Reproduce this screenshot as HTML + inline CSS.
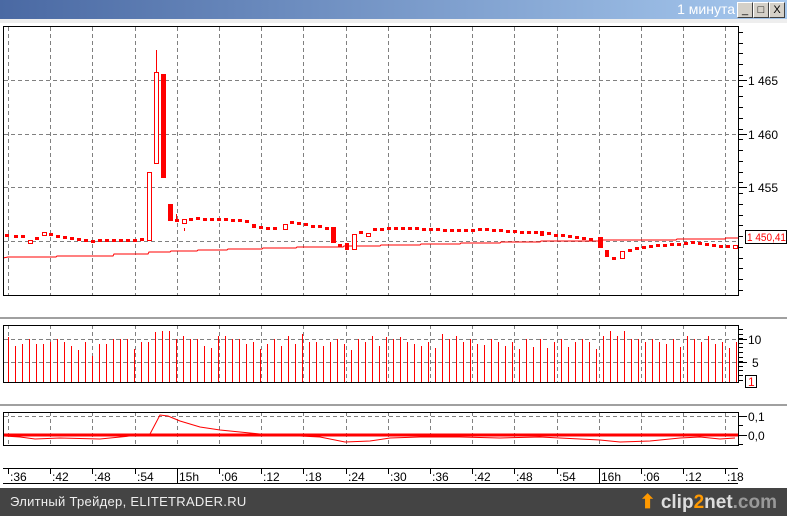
<!DOCTYPE html>
<html><head><meta charset="utf-8"><style>
html,body{margin:0;padding:0;background:#fff;width:787px;height:516px;overflow:hidden;font-family:"Liberation Sans",sans-serif}
#title{position:absolute;left:0;top:0;width:787px;height:19px;background:linear-gradient(90deg,#4a69a3,#a6c8ee)}
#title span{position:absolute;right:52px;top:1px;color:#fff;font-size:14px}
.btn{position:absolute;top:2px;width:14px;height:14px;background:#d4d0c8;border:1px solid;border-color:#fff #404040 #404040 #fff;font-size:11px;line-height:14px;text-align:center;color:#000}
#foot{position:absolute;left:0;top:488px;width:787px;height:28px;background:#444}
#foot .t{position:absolute;left:10px;top:6px;color:#eee;font-size:13px;letter-spacing:.3px}
#foot .l{position:absolute;right:10px;top:3px;color:#ddd;font-size:19px;font-weight:bold}
svg{position:absolute;left:0;top:0}
</style></head><body>
<div id="title"><span>1 минута</span>
<div class="btn" style="left:737px">_</div><div class="btn" style="left:753px">□</div><div class="btn" style="left:769px">X</div></div>
<svg id="s" width="787" height="488" xmlns="http://www.w3.org/2000/svg" font-family="Liberation Sans, sans-serif" font-size="12"></svg>
<div id="foot"><div class="t">Элитный Трейдер, ELITETRADER.RU</div><div class="l"><span style="color:#f90">⬆</span> clip<span style="color:#f90">2</span>net<span style="color:#999">.com</span></div></div>
<script>
var s=document.getElementById('s'),h='';
function L(x1,y1,x2,y2,c,w,d){h+='<line x1="'+x1+'" y1="'+y1+'" x2="'+x2+'" y2="'+y2+'" stroke="'+c+'" stroke-width="'+(w||1)+'"'+(d?' stroke-dasharray="4,3"':'')+'/>';}
function R(x,y,w,hh,f,st){h+='<rect x="'+x+'" y="'+y+'" width="'+w+'" height="'+hh+'" fill="'+f+'"'+(st?' stroke="'+st+'"':'')+'/>';}
function T(x,y,t,c,fs){h+='<text x="'+x+'" y="'+y+'" fill="'+(c||'#000')+'"'+(fs?' font-size="'+fs+'"':'')+'>'+t+'</text>';}
h+='<rect x="0" y="19" width="787" height="4" fill="#eee"/>';
var vx=[];for(var i=0;i<18;i++)vx.push(Math.round(8+i*42.2));
vx.forEach(function(x){L(x+.5,27,x+.5,295,'#808080',1,1);L(x+.5,325,x+.5,382,'#808080',1,1);L(x+.5,412,x+.5,446,'#808080',1,1);});
[80,134,187,241].forEach(function(y){L(4,y+.5,738,y+.5,'#808080',1,1)});
[339,362].forEach(function(y){L(4,y+.5,738,y+.5,'#808080',1,1)});
L(4,416.5,738,416.5,'#808080',1,1);
var ma=[[3,258],[8,257],[56,257],[57,256],[113,256],[114,254],[148,254],[149,252],[170,252],[171,251],[197,251],[198,250],[227,250],[228,249],[262,249],[263,248],[296,248],[297,247],[343,247],[344,246],[380,246],[381,245],[420,245],[421,244],[460,244],[461,243],[500,243],[501,242],[540,242],[541,241],[600,241],[601,240],[676,240],[677,239],[725,239],[726,238],[738,238]];
h+='<polyline fill="none" stroke="#f00" points="'+ma.map(function(p){return p.join(',')}).join(' ')+'"/>';
var c=[[5,235,236],[14,236,237],[21,236,237],[28,240,243,1],[35,238,238],[42,233,235,1],[49,234,235],[56,236,237],[63,237,238],[70,238,240],[77,239,240],[84,240,242],[91,241,242],[98,240,241],[105,240,241],[112,240,241],[119,240,241],[126,240,241],[133,240,241],[140,239,241],[147,172,240,1],[154,72,163,1],[161,74,178],[168,204,221],[175,220,221],[182,219,223,1],[189,219,220],[196,218,220],[203,219,220],[210,219,220],[217,219,220],[224,219,221],[231,220,221],[238,220,222],[245,221,223],[252,224,228],[259,227,228],[266,228,229],[273,228,230],[283,224,229,1],[290,222,224],[297,223,225],[304,224,226],[311,226,227],[318,226,228],[325,227,230],[331,227,243],[338,245,247],[345,243,250],[352,234,249,1],[359,231,234],[366,233,236,1],[373,229,230],[380,229,230],[387,228,230],[394,228,229],[401,228,229],[408,228,229],[415,228,229],[422,229,230],[429,229,230],[436,229,230],[443,230,231],[450,230,231],[457,230,231],[464,230,231],[471,230,231],[478,229,230],[485,229,230],[492,230,231],[499,230,231],[506,231,232],[513,231,232],[520,232,233],[527,232,233],[534,232,233],[540,231,236],[547,233,234],[554,235,236],[561,235,237],[568,236,238],[575,237,238],[582,238,239],[589,239,240],[598,237,248],[605,250,257],[612,258,259],[620,251,258,1],[628,250,251],[635,248,249],[642,247,248],[649,246,247],[656,245,246],[663,245,246],[670,244,245],[677,244,245],[684,243,244],[691,242,244],[698,243,244],[705,244,245],[712,245,247],[719,246,248],[726,246,247],[733,245,248,1]];
L(156.5,50,156.5,72,'#f00');L(176.5,214,176.5,220,'#f00');L(184.5,228,184.5,231,'#f00');
c.forEach(function(k){var d=k[2]-k[1];var hh=Math.max(d,3);var y=d<3?k[1]-1:k[1];var w=d<8?4:5;if(k[3])R(k[0]+.5,y+.5,4,hh,'#fff','#f00');else R(k[0],y,w,hh,'#f00');});
R(3.5,26.5,735,269,'none','#000');
for(var y=32;y<295;y+=10.74){L(739,Math.round(y)+.5,743,Math.round(y)+.5,'#000');}
[[80,'1 465'],[134,'1 460'],[187,'1 455']].forEach(function(p){L(739,p[0]+.5,747,p[0]+.5,'#000');T(748,p[0]+5,p[1]);});
R(745.5,230.5,41,13,'#fff','#000');h+='<text x="747" y="241" fill="#f00" font-size="11" textLength="39" lengthAdjust="spacingAndGlyphs">1 450,41</text>';
R(0,317,787,2,'#a0a0a0');R(0,404,787,2,'#a0a0a0');
var vh=[45,36,38,43,38,38,40,43,40,36,32,40,26,38,38,43,43,43,33,40,40,50,51,51,43,46,43,43,36,34,46,46,43,43,38,40,33,38,43,36,46,38,48,40,40,36,40,43,38,32,43,40,46,36,45,43,45,40,38,36,40,34,48,43,46,40,43,38,37,43,40,36,40,33,43,35,43,34,40,43,35,40,43,40,33,46,51,46,51,43,43,40,43,40,38,43,35,46,43,40,46,38,40,34,40];
for(var i=0;i<vh.length;i++){var x=8+i*7;if(x>736)break;L(x+.5,382-vh[i],x+.5,382,'#f00');}
R(3.5,325.5,735,57,'none','#000');
for(var y=329;y<383;y+=4.6){L(739,Math.round(y)+.5,743,Math.round(y)+.5,'#000');}
L(739,339.5,747,339.5,'#000');L(739,362.5,747,362.5,'#000');
T(748,344,'10');T(752,367,'5');R(745.5,375.5,11,12,'#fff','#000');T(748,386,'1','#f00');
L(4,435,738,435,'#f00',3);
var op=[[4,436],[20,437],[35,439],[60,438],[100,439],[150,434],[160,415],[168,416],[180,421],[200,427],[220,430],[240,432],[260,434],[300,436],[320,437],[345,442],[370,441],[390,438],[420,437],[460,437],[500,438],[540,437],[580,439],[600,440],[620,442],[650,441],[680,438],[700,437],[720,439],[735,438]];
h+='<polyline fill="none" stroke="#f00" points="'+op.map(function(p){return p.join(',')}).join(' ')+'"/>';
R(3.5,412.5,735,33,'none','#000');
L(739,416.5,747,416.5,'#000');L(739,435.5,747,435.5,'#000');L(739,425.5,743,425.5,'#000');L(739,444.5,743,444.5,'#000');
T(748,421,'0,1');T(748,440,'0,0');
L(3,468.5,738,468.5,'#000');L(3,483.5,738,483.5,'#000');
var tl=[':36',':42',':48',':54','15h',':06',':12',':18',':24',':30',':36',':42',':48',':54','16h',':06',':12',':18'];
vx.forEach(function(x,i){var b=(tl[i].indexOf('h')>0);L(x+.5,469,x+.5,b?483:474,'#000');T(x+2,481,tl[i]);});
s.innerHTML=h;
</script>
</body></html>
